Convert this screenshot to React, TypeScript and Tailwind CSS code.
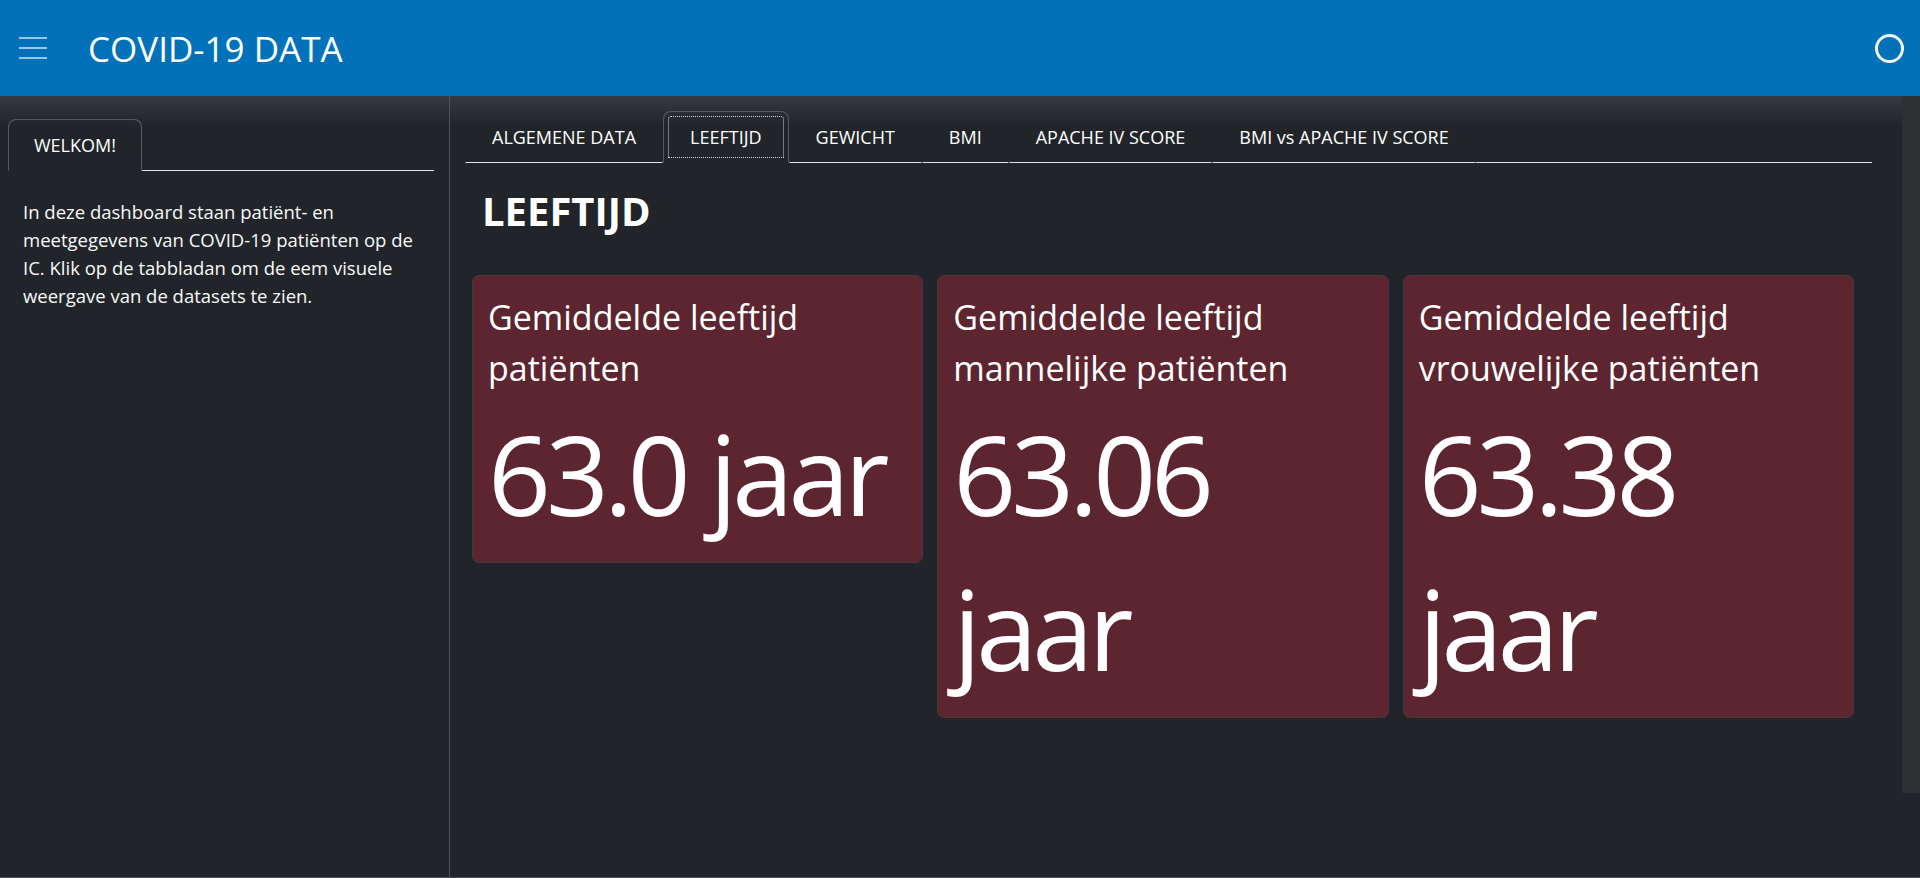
const tabs = [
  "ALGEMENE DATA",
  "LEEFTIJD",
  "GEWICHT",
  "BMI",
  "APACHE IV SCORE",
  "BMI vs APACHE IV SCORE",
];

const cards = [
  { title: "Gemiddelde leeftijd patiënten", value: "63.0 jaar" },
  { title: "Gemiddelde leeftijd mannelijke patiënten", value: "63.06 jaar" },
  { title: "Gemiddelde leeftijd vrouwelijke patiënten", value: "63.38 jaar" },
];

const activeTab = "LEEFTIJD";

export default function App() {
  return (
    <main className="h-[878px] w-[1920px] overflow-hidden bg-[#212529] font-['Open_Sans',sans-serif] text-white">
      <header className="flex h-[96px] items-center bg-[#0172b9] pl-[19px] pr-[16px]">
        <div className="flex flex-col gap-[8px]">
          <span className="block h-[2px] w-[28px] bg-white/60" />
          <span className="block h-[2px] w-[28px] bg-white/60" />
          <span className="block h-[2px] w-[28px] bg-white/60" />
        </div>
        <h1 className="ml-[41px] text-[35px] leading-none font-normal">
          COVID-19 DATA
        </h1>
        <div className="ml-auto h-[29px] w-[29px] rounded-full border-[3px] border-[#f4f4f4]" />
      </header>

      <div className="flex h-[782px] border-b border-[#4a4e52] bg-[linear-gradient(to_bottom,#36393d,#212529_30px)]">
        {/* sidebar */}
        <aside className="w-[450px] shrink-0 border-r border-[#4f5357] pt-[23px] pl-[8px] pr-[15px]">
          <nav className="flex">
            <div className="flex h-[52px] items-center rounded-t-[8px] border-x border-t border-b border-x-[#565a5f] border-t-[#565a5f] border-b-transparent px-[25px] text-[18px]">
              WELKOM!
            </div>
            <div className="flex-1 border-b border-[#dee2e6]" />
          </nav>
          <p className="mt-[27px] w-[416px] pl-[15px] text-[18.5px] leading-[28px] text-[#f8f9fa]">
            In deze dashboard staan patiënt- en meetgegevens van COVID-19
            patiënten op de IC. Klik op de tabbladan om de eem visuele
            weergave van de datasets te zien.
          </p>
        </aside>

        {/* content */}
        <section className="flex-1 pt-[15px] pl-[15px] pr-[30px]">
          <nav className="flex">
            {tabs.map((tab) =>
              tab === activeTab ? (
                <button
                  key={tab}
                  className="flex h-[52px] items-center rounded-t-[8px] border-x border-t border-b border-x-[#565a5f] border-t-[#565a5f] border-b-transparent px-[26px] text-[18px] outline-1 outline-dotted outline-offset-[-6px] outline-white/80"
                >
                  {tab}
                </button>
              ) : (
                <button
                  key={tab}
                  className="flex h-[52px] items-center border-x border-t border-b border-x-transparent border-t-transparent border-b-[#dee2e6] px-[26px] text-[18px]"
                >
                  {tab}
                </button>
              )
            )}
            <div className="flex-1 border-b border-[#dee2e6]" />
          </nav>

          <h2 className="mt-[24px] pl-[17px] text-[40px] leading-[48px] font-bold">
            LEEFTIJD
          </h2>

          <div className="mt-[40px] ml-[7px] grid w-[1382px] grid-cols-3 items-start gap-[14px]">
            {cards.map((card) => (
              <div
                key={card.title}
                className="rounded-[7px] border border-[#44383c] bg-[#5c2530] px-[15px] pt-[16px] pb-[11px]"
              >
                <h3 className="text-[34px] leading-[51px] font-normal">
                  {card.title}
                </h3>
                <p className="mt-[2px] text-[110px] leading-[155px] tracking-[-0.045em]">
                  {card.value}
                </p>
              </div>
            ))}
          </div>
        </section>

        {/* scrollbar */}
        <div className="w-[18px] shrink-0">
          <div className="h-[697px] bg-[#2e3134]" />
        </div>
      </div>
    </main>
  );
}
